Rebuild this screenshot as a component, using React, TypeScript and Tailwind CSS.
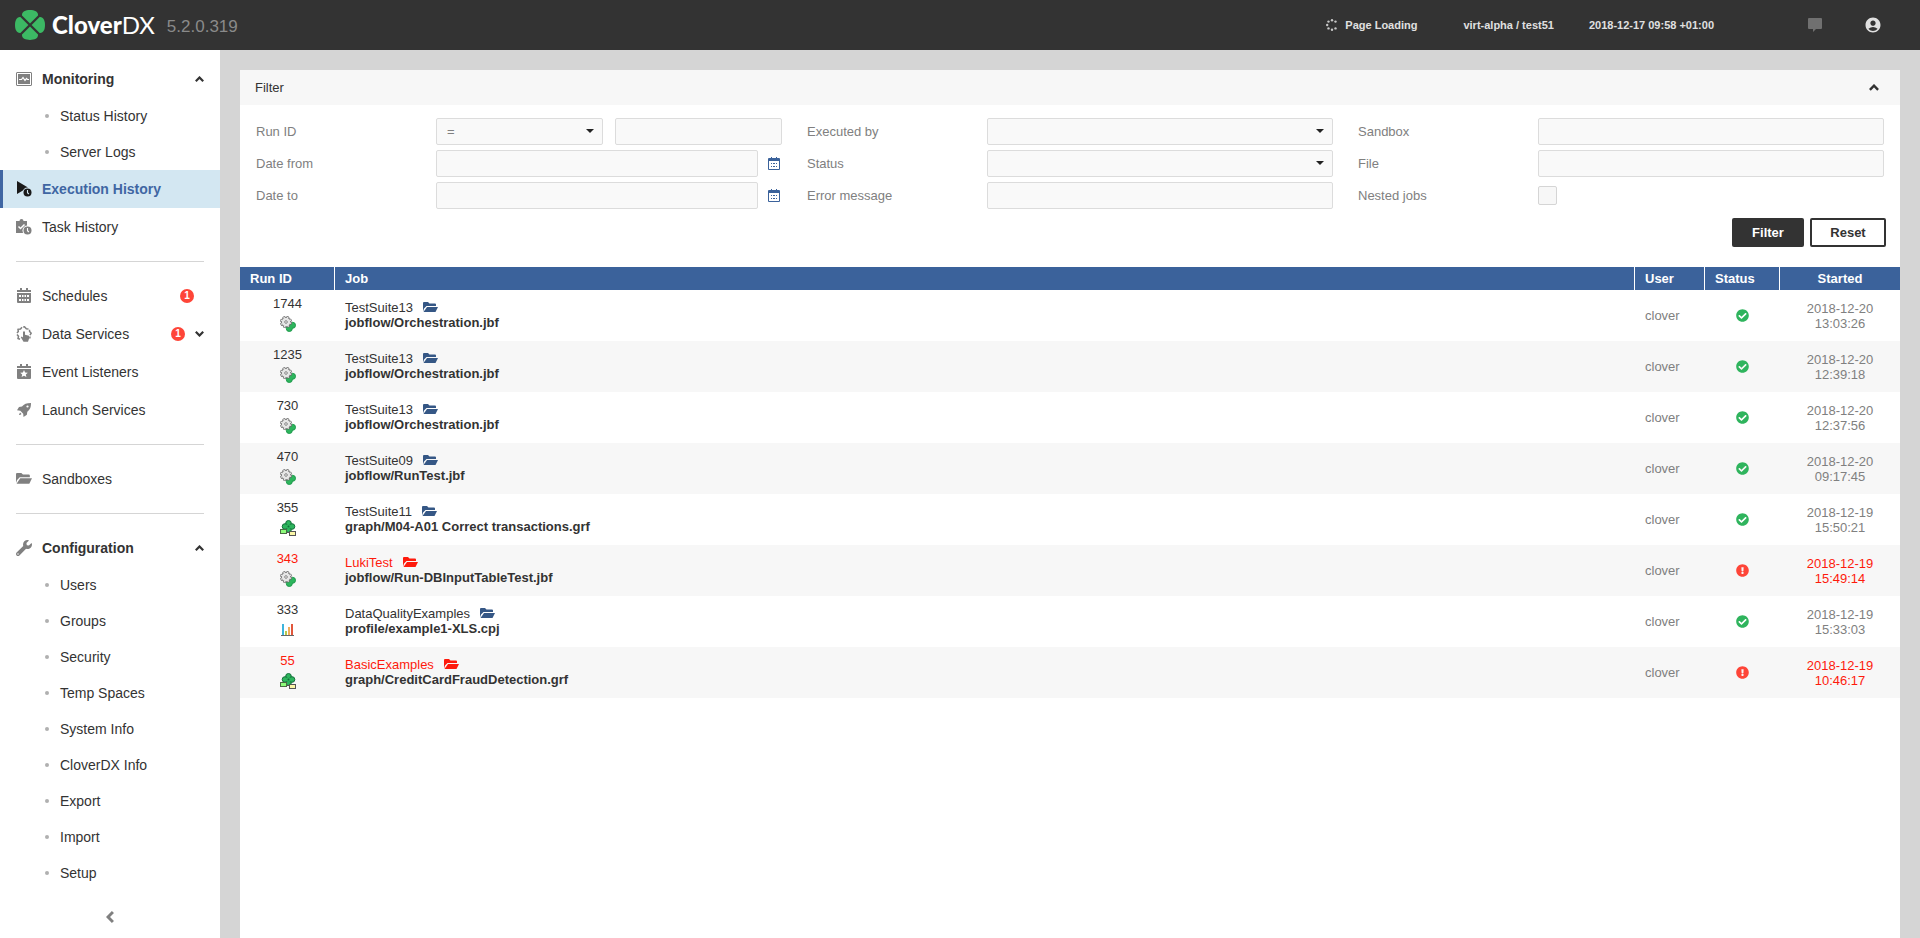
import type { ReactNode } from "react";
import { FaCheckCircle, FaExclamationCircle, FaWrench } from "react-icons/fa";
import { MdAccountCircle } from "react-icons/md";

/* ---------- Icons ---------- */

function CloverLogo() {
  return (
    <svg viewBox="0 0 30 30" className="size-[30px]">
      <g fill="#3cb964">
        <path d="M15 13.4 L7 5.4 C6.6 1.6 10.6 0 15 0 C19.4 0 23.4 1.6 23 5.4 Z" />
        <path d="M15 13.4 L7 5.4 C6.6 1.6 10.6 0 15 0 C19.4 0 23.4 1.6 23 5.4 Z" transform="rotate(90 15 15)" />
        <path d="M15 13.4 L7 5.4 C6.6 1.6 10.6 0 15 0 C19.4 0 23.4 1.6 23 5.4 Z" transform="rotate(180 15 15)" />
        <path d="M15 13.4 L7 5.4 C6.6 1.6 10.6 0 15 0 C19.4 0 23.4 1.6 23 5.4 Z" transform="rotate(270 15 15)" />
      </g>
    </svg>
  );
}

function FolderIcon({ className = "" }: { className?: string }) {
  return (
    <svg viewBox="0 0 15 11" className={className} fill="currentColor">
      <path d="M0 1q0-1 1-1h4l1.500 1.500H12q1 0 1 1V4H3.500L1 6.500 0 9.500z" />
      <path d="M4 5h11l-2.500 5H.500z" />
    </svg>
  );
}

function MonitorIcon() {
  return (
    <svg viewBox="0 0 16 14" className="w-4">
      <rect x="0.5" y="0.5" width="15" height="13" rx="0.5" fill="#fff" stroke="#808080" />
      <rect x="2" y="2" width="12" height="10" fill="#808080" />
      <path d="M3 7.500h2.500l1.500-2 2 3 1.500-2 1 1H13" fill="none" stroke="#fff" strokeWidth="1.2" />
    </svg>
  );
}

function PlayClockIcon() {
  return (
    <svg viewBox="0 0 16 16" className="w-4">
      <path d="M1 0l11 6.5L1 13z" fill="#1a1a1a" />
      <circle cx="11.5" cy="11.5" r="5" fill="#d3e7f2" />
      <circle cx="11.5" cy="11.5" r="4" fill="#1a1a1a" />
      <path d="M11.5 9v2.700l1.400 1.300" fill="none" stroke="#d3e7f2" strokeWidth="1.1" />
    </svg>
  );
}

function TaskClockIcon() {
  return (
    <svg viewBox="0 0 16 16" className="w-4">
      <path d="M0 2h3.500a2 2 0 0 1 4 0H11v12H0z" fill="#808080" />
      <path d="M2.500 7.500l2 2 4-4" fill="none" stroke="#fff" strokeWidth="1.500" />
      <circle cx="11.500" cy="11.500" r="5" fill="#fff" />
      <circle cx="11.500" cy="11.500" r="4" fill="#808080" />
      <path d="M11.500 9v2.700l1.400 1.300" fill="none" stroke="#fff" strokeWidth="1.100" />
    </svg>
  );
}

function ScheduleIcon() {
  return (
    <svg viewBox="0 0 14 16" className="w-[14px]" fill="#808080">
      <path d="M3 0h2v2h4V0h2v2h3v2H0V2h3z" />
      <path d="M0 5h14v9a1 1 0 0 1-1 1H1a1 1 0 0 1-1-1z" />
      <g fill="#fff">
        <path d="M2 7h2v2H2zM5 7h1.500v2H5zM7.500 7H9v2H7.500zM10 7h2v2h-2z" />
        <path d="M2 11h2v2H2zM5 11h1.500v2H5zM7.500 11H9v2H7.500zM10 11h2v2h-2z" />
      </g>
    </svg>
  );
}

function DataServiceIcon() {
  return (
    <svg viewBox="0 0 16 16" className="w-4">
      <path
        d="M4 13.300L2 12.500 2.500 10.300 1 8.500M1 7L2.300 5.500 2 3.300 4.500 3 6 1.200M7.200 1L8.500 .8 10.300 2.800 12.500 2.900M13.500 3.800L13.600 5.500 15.200 7.200 14 9.200M14 10.500L13.800 12.500"
        fill="none"
        stroke="#808080"
        strokeWidth="1.500"
      />
      <path d="M7 5.800q1-1 2 0v2.900l4 1v3l-1 3H7.500L4.800 11.300l1-.9 1.200 1z" fill="#808080" />
    </svg>
  );
}

function EventIcon() {
  return (
    <svg viewBox="0 0 14 16" className="w-[14px]" fill="#808080">
      <path d="M3 0h2v2h4V0h2v2h3v2H0V2h3z" />
      <path d="M0 5h14v9a1 1 0 0 1-1 1H1a1 1 0 0 1-1-1z" />
      <path d="M7 6l1.100 2.400 2.700.3-2 1.800.6 2.600L7 11.800l-2.400 1.300.6-2.600-2-1.800 2.700-.3z" fill="#fff" />
    </svg>
  );
}

function RocketIcon() {
  return (
    <svg viewBox="0 0 14 14" className="w-[14px]">
      <path
        d="M14 0C9.500 0 7 1 5 3.500L2 4 0 7.200l3.300.6L6.200 10.700 6.500 14l3.400-2.200.4-3C13 6.500 14 4.500 14 0z"
        fill="#808080"
      />
      <path d="M3 9.500l1.500 1.500-1.500 1H2z" fill="#808080" />
      <circle cx="10.500" cy="3.500" r="1.100" fill="#fff" />
    </svg>
  );
}

function CalendarIcon() {
  return (
    <svg viewBox="0 0 12 13" className="w-3" fill="#3b629b">
      <path d="M3 0h1v1h4V0h1v1h2a1 1 0 0 1 1 1v10a1 1 0 0 1-1 1H1a1 1 0 0 1-1-1V2a1 1 0 0 1 1-1h2z" />
      <path d="M1 4h10v8H1z" fill="#fff" />
      <path d="M3 6h1v1H3zM5 6h2v1H5zM8 6h1v1H8zM3 9h1v1H3zM5 9h2v1H5zM8 9h1v1H8z" />
    </svg>
  );
}

function Chevron({ className = "w-[9px]" }: { className?: string }) {
  return (
    <svg viewBox="0 0 9 6" className={className}>
      <path d="M0.800 5.200L4.500 1.500l3.700 3.700" fill="none" stroke="currentColor" strokeWidth="2.200" />
    </svg>
  );
}

function LoadingIcon() {
  return (
    <svg viewBox="0 0 12 12" className="w-3" fill="#c8c8c8">
      <circle cx="6" cy="1.300" r="1.200" />
      <circle cx="9.500" cy="2.600" r="1.200" />
      <circle cx="2.500" cy="2.600" r="1.200" />
      <circle cx="1.200" cy="6" r="1.200" />
      <circle cx="2.500" cy="9.400" r="1.200" />
      <circle cx="6" cy="10.700" r="1.200" />
      <circle cx="9.500" cy="9.400" r="1.200" />
    </svg>
  );
}

function MessageIcon() {
  return (
    <svg viewBox="0 0 14 14" className="w-[14px]">
      <path d="M1 0h12a1 1 0 0 1 1 1v9a1 1 0 0 1-1 1H8l-3 3v-3H1a1 1 0 0 1-1-1V1a1 1 0 0 1 1-1z" fill="#707070" />
    </svg>
  );
}

function JobflowIcon() {
  return (
    <svg viewBox="0 0 16 16" className="size-4">
      <g fill="#2db55d" stroke="#1f9a4c" strokeWidth="1">
        <circle cx="12.500" cy="9.300" r="3" />
        <circle cx="9.300" cy="12.500" r="3" />
      </g>
      <path d="M7 7h6v4l-2 2H7z" fill="#2db55d" />
      {/* gear: dark outline first, light body with matching teeth on top */}
      <circle cx="6" cy="6" r="5.200" fill="#777" />
      <circle cx="6" cy="6" r="5.200" fill="none" stroke="#666" strokeWidth="1.600" strokeDasharray="2.600 1.484" />
      <circle cx="6" cy="6" r="4.200" fill="#e6e6e6" />
      <circle cx="6" cy="6" r="4.600" fill="none" stroke="#e6e6e6" strokeWidth="1.600" strokeDasharray="1.400 2.213" strokeDashoffset="-0.450" />
      <circle cx="6" cy="6" r="1.300" fill="#fff" stroke="#777" strokeWidth="0.900" />
    </svg>
  );
}

function GraphIcon() {
  return (
    <svg viewBox="0 0 16 16" className="size-4">
      <g fill="#2db55d" stroke="#12703a" strokeWidth="1">
        <circle cx="8.500" cy="3.300" r="2.800" />
        <circle cx="8.500" cy="9.700" r="2.800" />
        <circle cx="5" cy="6.500" r="2.800" />
        <circle cx="12" cy="6.500" r="2.800" />
      </g>
      <path d="M6.500 4.500h4v4h-4z" fill="#2db55d" />
      <circle cx="8.500" cy="6.500" r="1" fill="#12703a" />
      <path d="M6 12.500h4" stroke="#555" />
      <rect x="0.500" y="9.500" width="6" height="4" fill="#8dfb7a" stroke="#4a6b45" />
      <rect x="9.500" y="11.500" width="6" height="4" fill="#fbf7a8" stroke="#555" />
    </svg>
  );
}

function ProfileIcon() {
  return (
    <svg viewBox="0 0 16 16" className="size-4">
      <path d="M2 2h2v11H2z" fill="#3db4dc" />
      <path d="M5 9h2v4H5z" fill="#b5c94c" />
      <path d="M8 5h2v8H8z" fill="#f0ad5a" />
      <path d="M11 2h2v11h-2z" fill="#e2573c" />
      <path d="M1 13.500h13" stroke="#666" />
    </svg>
  );
}

/* ---------- Header ---------- */

function Header() {
  return (
    <header className="flex h-[50px] shrink-0 items-center justify-between bg-[#333] pl-[15px] pr-[38px]">
      <div className="flex items-center">
        <CloverLogo />
        <div className="ml-[7px] font-[Lato] text-2xl leading-[30px] text-white">
          <span className="font-black">Clover</span>
          <span>DX</span>
        </div>
        <span className="ml-3 mt-1 text-[17px] leading-5 text-[#8a8a8a]">5.2.0.319</span>
      </div>
      <div className="flex items-center text-[11px] font-bold text-[#e0e0e0]">
        <span className="mr-[46px] flex items-center gap-[7px]">
          <LoadingIcon />
          Page Loading
        </span>
        <span className="mr-[35px]">virt-alpha / test51</span>
        <span className="mr-[94px]">2018-12-17 09:58 +01:00</span>
        <button aria-label="Messages" className="mr-[42px]">
          <MessageIcon />
        </button>
        <button aria-label="Account">
          <MdAccountCircle className="size-[18px] text-[#e0e0e0]" />
        </button>
      </div>
    </header>
  );
}

/* ---------- Sidebar ---------- */

type ItemProps = {
  icon: ReactNode;
  label: string;
  bold?: boolean;
  active?: boolean;
  children?: ReactNode;
};

function NavItem({ icon, label, bold, active, children }: ItemProps) {
  return (
    <a
      href="#"
      className={`flex h-[38px] items-center border-l-3 pl-[13px] pr-4 ${
        active ? "border-[#3f66a3] bg-[#d3e7f2] text-[#3f66a3]" : "border-transparent"
      } ${bold || active ? "font-bold" : ""}`}
    >
      <span className="mr-[10px] flex w-4 justify-center text-[#808080]">{icon}</span>
      <span className="flex-1">{label}</span>
      {children}
    </a>
  );
}

function SubItem({ label }: { label: string }) {
  return (
    <a href="#" className="flex h-9 items-center pl-[45px]">
      <span className="mr-[11px] size-1 rounded-full bg-[#b0b0b0]" />
      {label}
    </a>
  );
}

function Badge() {
  return (
    <span className="mr-[10px] flex size-[14px] items-center justify-center rounded-full bg-[#fe4538] text-[10px] font-bold text-white">
      1
    </span>
  );
}

function Divider() {
  return <hr className="mx-4 my-[15px] border-t border-[#d5d5d5]" />;
}

function Sidebar() {
  return (
    <nav className="flex w-[220px] shrink-0 flex-col bg-white pt-[10px] text-sm">
      <NavItem icon={<MonitorIcon />} label="Monitoring" bold>
        <Chevron />
      </NavItem>
      <SubItem label="Status History" />
      <SubItem label="Server Logs" />
      <NavItem icon={<PlayClockIcon />} label="Execution History" active />
      <NavItem icon={<TaskClockIcon />} label="Task History" />
      <Divider />
      <NavItem icon={<ScheduleIcon />} label="Schedules">
        <Badge />
      </NavItem>
      <NavItem icon={<DataServiceIcon />} label="Data Services">
        <Badge />
        <Chevron className="w-[9px] rotate-180" />
      </NavItem>
      <NavItem icon={<EventIcon />} label="Event Listeners" />
      <NavItem icon={<RocketIcon />} label="Launch Services" />
      <Divider />
      <NavItem icon={<FolderIcon className="w-4" />} label="Sandboxes" />
      <Divider />
      <NavItem icon={<FaWrench className="size-4" />} label="Configuration" bold>
        <Chevron />
      </NavItem>
      <SubItem label="Users" />
      <SubItem label="Groups" />
      <SubItem label="Security" />
      <SubItem label="Temp Spaces" />
      <SubItem label="System Info" />
      <SubItem label="CloverDX Info" />
      <SubItem label="Export" />
      <SubItem label="Import" />
      <SubItem label="Setup" />
      <button aria-label="Collapse menu" className="flex h-[52px] items-center justify-center text-[#808080]">
        <Chevron className="w-3 -rotate-90" />
      </button>
    </nav>
  );
}

/* ---------- Filter ---------- */

function Field({ id, label, children }: { id: string; label: string; children: ReactNode }) {
  return (
    <div className="flex h-[27px] items-center">
      <label htmlFor={id} className="w-[180px] shrink-0">
        {label}
      </label>
      {children}
    </div>
  );
}

function TextInput({ id, label }: { id: string; label?: string }) {
  return (
    <input
      id={id}
      type="text"
      aria-label={label}
      className="h-[27px] w-full min-w-0 flex-1 rounded-xs border border-[#dcdcdc] bg-[#f9f9f9] px-3"
    />
  );
}

function SelectInput({ id, value = "" }: { id: string; value?: string }) {
  return (
    <span className="relative min-w-0 flex-1">
      <select
        id={id}
        className="block h-[27px] w-full appearance-none rounded-xs border border-[#dcdcdc] bg-[#f9f9f9] px-[10px]"
      >
        <option>{value}</option>
      </select>
      <svg viewBox="0 0 8 4" className="pointer-events-none absolute right-[9px] top-[11px] w-2">
        <path d="M0 0h8L4 4z" fill="#222" />
      </svg>
    </span>
  );
}

function DateInput({ id, label }: { id: string; label: string }) {
  return (
    <>
      <TextInput id={id} />
      <button type="button" aria-label={`Pick ${label}`} className="ml-[10px] mr-[2px]">
        <CalendarIcon />
      </button>
    </>
  );
}

function FilterPanel() {
  return (
    <section>
      <div className="flex h-[35px] items-center justify-between bg-[#f7f7f7] pl-[15px] pr-[21px]">
        <h2>Filter</h2>
        <button aria-label="Collapse filter">
          <Chevron className="w-[10px]" />
        </button>
      </div>
      <form className="pl-4 pr-[14px] pt-[13px]">
        <div className="grid grid-cols-3 gap-x-[25px] pr-[2px] text-[#808080]">
          <div className="flex flex-col gap-[5px]">
            <Field id="run-op" label="Run ID">
              <div className="grid flex-1 grid-cols-2 gap-3">
                <SelectInput id="run-op" value="=" />
                <TextInput id="run-id" label="Run ID value" />
              </div>
            </Field>
            <Field id="date-from" label="Date from">
              <DateInput id="date-from" label="date from" />
            </Field>
            <Field id="date-to" label="Date to">
              <DateInput id="date-to" label="date to" />
            </Field>
          </div>
          <div className="flex flex-col gap-[5px]">
            <Field id="executed-by" label="Executed by">
              <SelectInput id="executed-by" />
            </Field>
            <Field id="status" label="Status">
              <SelectInput id="status" />
            </Field>
            <Field id="error" label="Error message">
              <TextInput id="error" />
            </Field>
          </div>
          <div className="flex flex-col gap-[5px]">
            <Field id="sandbox" label="Sandbox">
              <TextInput id="sandbox" />
            </Field>
            <Field id="file" label="File">
              <TextInput id="file" />
            </Field>
            <Field id="nested" label="Nested jobs">
              <input
                id="nested"
                type="checkbox"
                className="size-[19px] appearance-none rounded-xs border border-[#d5d5d5] bg-[#f7f7f7]"
              />
            </Field>
          </div>
        </div>
        <div className="mb-5 mt-[9px] flex justify-end gap-[6px] font-bold">
          <button type="submit" className="h-[29px] w-[72px] rounded-xs bg-[#333] text-white">
            Filter
          </button>
          <button type="reset" className="h-[29px] w-[76px] rounded-xs border-2 border-[#333] bg-white">
            Reset
          </button>
        </div>
      </form>
    </section>
  );
}

/* ---------- Executions table ---------- */

const runs = [
  { id: 1744, type: "jobflow", sandbox: "TestSuite13", job: "jobflow/Orchestration.jbf", ok: true, date: "2018-12-20", time: "13:03:26" },
  { id: 1235, type: "jobflow", sandbox: "TestSuite13", job: "jobflow/Orchestration.jbf", ok: true, date: "2018-12-20", time: "12:39:18" },
  { id: 730, type: "jobflow", sandbox: "TestSuite13", job: "jobflow/Orchestration.jbf", ok: true, date: "2018-12-20", time: "12:37:56" },
  { id: 470, type: "jobflow", sandbox: "TestSuite09", job: "jobflow/RunTest.jbf", ok: true, date: "2018-12-20", time: "09:17:45" },
  { id: 355, type: "graph", sandbox: "TestSuite11", job: "graph/M04-A01 Correct transactions.grf", ok: true, date: "2018-12-19", time: "15:50:21" },
  { id: 343, type: "jobflow", sandbox: "LukiTest", job: "jobflow/Run-DBInputTableTest.jbf", ok: false, date: "2018-12-19", time: "15:49:14" },
  { id: 333, type: "profile", sandbox: "DataQualityExamples", job: "profile/example1-XLS.cpj", ok: true, date: "2018-12-19", time: "15:33:03" },
  { id: 55, type: "graph", sandbox: "BasicExamples", job: "graph/CreditCardFraudDetection.grf", ok: false, date: "2018-12-19", time: "10:46:17" },
];

function TypeIcon({ type }: { type: string }) {
  if (type === "graph") return <GraphIcon />;
  if (type === "profile") return <ProfileIcon />;
  return <JobflowIcon />;
}

function RunsTable() {
  return (
    <table className="w-full table-fixed border-separate border-spacing-0 leading-[15px]">
      <thead>
        <tr className="h-[23px] bg-[#3b629b] text-left text-white">
          <th className="w-[95px] border-r border-white pl-[10px]">Run ID</th>
          <th className="border-r border-white pl-[10px]">Job</th>
          <th className="w-[70px] border-r border-white pl-[10px]">User</th>
          <th className="w-[75px] border-r border-white pl-[10px]">Status</th>
          <th className="w-[120px] text-center">Started</th>
        </tr>
      </thead>
      <tbody>
        {runs.map((run) => (
          <tr key={run.id} className="h-[51px] even:bg-[#f7f7f7]">
            <td className={`pb-1 ${run.ok ? "" : "text-[#fe1a0c]"}`}>
              <div className="flex flex-col items-center gap-[5px]">
                {run.id}
                <TypeIcon type={run.type} />
              </div>
            </td>
            <td className="pb-[2px] pl-[10px]">
              <a href="#" className={`flex items-center gap-[10px] ${run.ok ? "" : "text-[#fe1a0c]"}`}>
                {run.sandbox}
                <FolderIcon className={`w-[15px] ${run.ok ? "text-[#355785]" : ""}`} />
              </a>
              <a href="#" className="block font-bold">
                {run.job}
              </a>
            </td>
            <td className="pl-[10px] text-[#808080]">clover</td>
            <td>
              {run.ok ? (
                <FaCheckCircle className="mx-auto size-[13px] text-[#2fb45d]" />
              ) : (
                <FaExclamationCircle className="mx-auto size-[13px] text-[#fe4538]" />
              )}
            </td>
            <td className={`text-center ${run.ok ? "text-[#808080]" : "text-[#fe1a0c]"}`}>
              {run.date}
              <br />
              {run.time}
            </td>
          </tr>
        ))}
      </tbody>
    </table>
  );
}

function App() {
  return (
    <div className="flex min-h-screen flex-col font-['Liberation_Sans',Arial,sans-serif] text-[#333]">
      <Header />
      <div className="flex flex-1">
        <Sidebar />
        <main className="flex flex-1 bg-[#d5d5d5] px-5 pt-5">
          <div className="flex-1 bg-white text-[13px]">
            <FilterPanel />
            <RunsTable />
          </div>
        </main>
      </div>
    </div>
  );
}

export default App;
